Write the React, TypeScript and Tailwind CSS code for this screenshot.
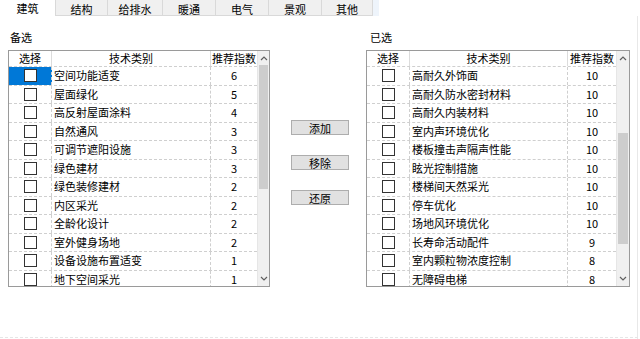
import React from "react";

const leftRows: [string, string][] = [
  ["空间功能适变", "6"],
  ["屋面绿化", "5"],
  ["高反射屋面涂料", "4"],
  ["自然通风", "3"],
  ["可调节遮阳设施", "3"],
  ["绿色建材", "3"],
  ["绿色装修建材", "2"],
  ["内区采光", "2"],
  ["全龄化设计", "2"],
  ["室外健身场地", "2"],
  ["设备设施布置适变", "1"],
  ["地下空间采光", "1"],
];

const rightRows: [string, string][] = [
  ["高耐久外饰面", "10"],
  ["高耐久防水密封材料", "10"],
  ["高耐久内装材料", "10"],
  ["室内声环境优化", "10"],
  ["楼板撞击声隔声性能", "10"],
  ["眩光控制措施", "10"],
  ["楼梯间天然采光", "10"],
  ["停车优化", "10"],
  ["场地风环境优化", "10"],
  ["长寿命活动配件", "9"],
  ["室内颗粒物浓度控制", "8"],
  ["无障碍电梯", "8"],
];

function Check() {
  return <div className="w-[13px] h-[13px] border border-[#333333] bg-white" />;
}

function Chevron({ up }: { up?: boolean }) {
  return (
    <svg width="8" height="6" viewBox="0 0 8 6">
      <path
        d={up ? "M1 5 L4 2 L7 5" : "M1 1 L4 4 L7 1"}
        fill="none"
        stroke="#606060"
        strokeWidth="1.2"
      />
    </svg>
  );
}

function Grid({
  rows,
  col2,
  col3,
  scroll,
  thumbTop,
  thumbH,
  firstSelected,
}: {
  rows: [string, string][];
  col2: string;
  col3: string;
  scroll: string;
  thumbTop: string;
  thumbH: string;
  firstSelected?: boolean;
}) {
  return (
    <div className="flex h-[237px] border border-[#9a9a9a] bg-white">
      <div className="flex flex-col flex-1 overflow-hidden">
        <div className="flex h-[15px] shrink-0 text-[11px] leading-[15px] text-black">
          <div className="w-[43px] shrink-0 text-center border-r border-[#dcdcdc]">选择</div>
          <div className={col2 + " shrink-0 text-center border-r border-[#dcdcdc]"}>技术类别</div>
          <div className={col3 + " shrink-0 text-center whitespace-nowrap"}>推荐指数</div>
        </div>
        {rows.map(([name, n], i) => (
          <div
            key={i}
            className="flex h-[18.5px] shrink-0 border-t border-dashed border-[#cfcfcf] text-[11px] text-black"
          >
            <div
              className={
                "w-[43px] shrink-0 flex items-center justify-center border-r border-dashed border-[#cfcfcf] " +
                (firstSelected && i === 0 ? "bg-[#0078d7]" : "")
              }
            >
              <Check />
            </div>
            <div
              className={
                col2 +
                " shrink-0 flex items-center pl-[2px] leading-[15px] border-r border-dashed border-[#cfcfcf] whitespace-nowrap"
              }
            >
              {name}
            </div>
            <div className={col3 + " shrink-0 flex items-center justify-center leading-[15px]"}>
              {n}
            </div>
          </div>
        ))}
      </div>
      <div className={scroll + " shrink-0 flex flex-col bg-[#f0f0f0] border-l border-[#e6e6e6]"}>
        <div className="h-[14px] shrink-0 flex items-center justify-center">
          <Chevron up />
        </div>
        <div className={thumbTop + " shrink-0"} />
        <div className={thumbH + " shrink-0 mx-[1px] bg-[#cdcdcd]"} />
        <div className="flex-1" />
        <div className="h-[14px] shrink-0 flex items-center justify-center">
          <Chevron />
        </div>
      </div>
    </div>
  );
}

export default function App() {
  const tabs = ["结构", "给排水", "暖通", "电气", "景观", "其他"];
  const widths = ["w-[52px]", "w-[55px]", "w-[53px]", "w-[53px]", "w-[53px]", "w-[52px]"];
  return (
    <div className="w-[640px] h-[339px] bg-white relative overflow-hidden font-['Noto_Sans_CJK_SC','Liberation_Sans',sans-serif] text-black">
      <div className="flex h-[16px]">
        <div className="w-[55px] h-[16px] flex items-start justify-center pt-[1px] text-[11px] leading-[14px] bg-white">
          建筑
        </div>
        {tabs.map((t, i) => (
          <div
            key={t}
            className={
              widths[i] +
              " h-[16px] flex items-start justify-center pt-[2px] text-[11px] leading-[14px] bg-[#f0f0f0] border-l border-b border-[#d9d9d9] " +
              (i === tabs.length - 1 ? "border-r" : "")
            }
          >
            {t}
          </div>
        ))}
        <div className="w-[6px] h-[16px] bg-[#eef4fb]" />
      </div>
      <div className="flex h-[323px] border-r border-[#e8e8e8] w-[638px]">
        <div className="ml-[8px] w-[262px] flex flex-col">
          <div className="h-[14px] mt-[14px] mb-[6px] pl-[2px] text-[11px] leading-[14px]">备选</div>
          <Grid
            rows={leftRows}
            col2="w-[159px]"
            col3="w-[46px]"
            scroll="w-[12px]"
            thumbTop="h-[0px]"
            thumbH="h-[124px]"
            firstSelected
          />
        </div>
        <div className="w-[96px] flex flex-col pt-[104px] pl-[21px] gap-[20px]">
          <button className="w-[58px] h-[15px] bg-[#e1e1e1] border border-[#adadad] text-[11px] leading-[12px] flex items-center justify-center">
            添加
          </button>
          <button className="w-[58px] h-[15px] bg-[#e1e1e1] border border-[#adadad] text-[11px] leading-[12px] flex items-center justify-center">
            移除
          </button>
          <button className="w-[58px] h-[15px] bg-[#e1e1e1] border border-[#adadad] text-[11px] leading-[12px] flex items-center justify-center">
            还原
          </button>
        </div>
        <div className="w-[264px] flex flex-col">
          <div className="h-[14px] mt-[14px] mb-[6px] pl-[4px] text-[11px] leading-[14px]">已选</div>
          <Grid
            rows={rightRows}
            col2="w-[158px]"
            col3="w-[48px]"
            scroll="w-[13px]"
            thumbTop="h-[68px]"
            thumbH="h-[111px]"
          />
        </div>
      </div>
      <div className="absolute left-0 bottom-[1px] w-[638px] border-b border-dashed border-[#e6e6e6]" />
    </div>
  );
}
